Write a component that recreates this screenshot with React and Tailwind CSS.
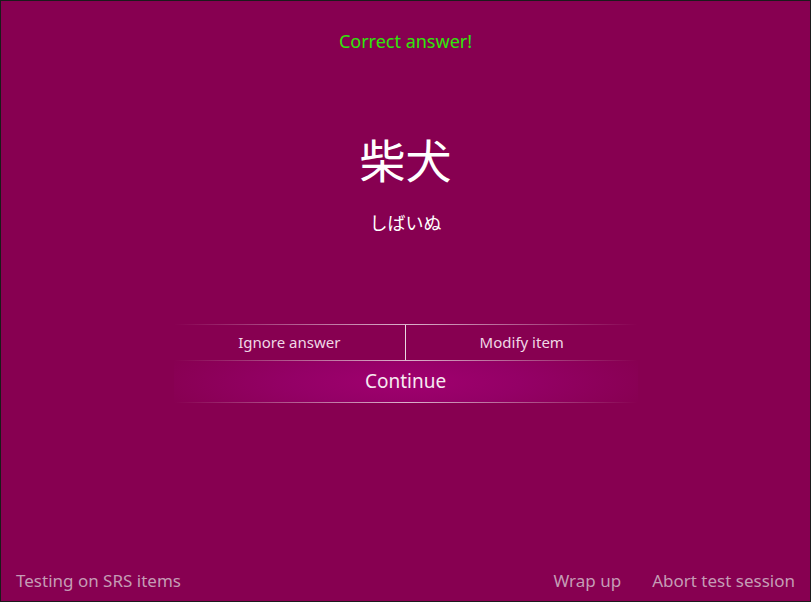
export default function App() {
  const font = { fontFamily: '"Noto Sans", "Noto Sans CJK JP", sans-serif' };
  return (
    <div
      className="w-[811px] h-[602px] bg-[#870051] border border-[#1b1b1b] flex flex-col items-center text-white"
      style={font}
    >
      <div className="mt-[27px] h-[26px] leading-[26px] text-[18px] text-[#2fe60a]">Correct answer!</div>
      <div
        className="mt-[77px] h-[54px] leading-[54px] text-[46px] text-white"
        style={{ fontFamily: '"Noto Sans CJK JP", sans-serif' }}
      >
        柴犬
      </div>
      <div
        className="mt-[23px] h-[28px] leading-[28px] text-[18px] text-white"
        style={{ fontFamily: '"Noto Sans CJK JP", sans-serif' }}
      >
        しばいぬ
      </div>
      <div className="mt-[88px] w-[464px] flex flex-col">
        <div className="h-px bg-gradient-to-r from-transparent via-white/70 to-transparent" />
        <div className="flex h-[35px]">
          <div className="flex-1 flex items-center justify-center text-[15px] text-[#f0d8e6]">Ignore answer</div>
          <div className="w-px bg-[#e8d8e0]" />
          <div className="flex-1 flex items-center justify-center text-[15px] text-[#f0d8e6]">Modify item</div>
        </div>
        <div className="h-px bg-gradient-to-r from-transparent via-white/70 to-transparent" />
        <div className="h-[41px] flex items-center justify-center text-[19px] text-[#f6eaf1] bg-[radial-gradient(ellipse_55%_130%_at_center,#a0006f_0%,#940066_45%,#870051_100%)]">
          Continue
        </div>
        <div className="h-px bg-gradient-to-r from-transparent via-white/70 to-transparent" />
      </div>
      <div className="flex-1" />
      <div className="w-full flex items-center px-[15px] mb-[8px] h-[24px] text-[17px] text-[#c59cb5]">
        <span>Testing on SRS items</span>
        <span className="ml-auto">Wrap up</span>
        <span className="ml-[31px]">Abort test session</span>
      </div>
    </div>
  );
}
